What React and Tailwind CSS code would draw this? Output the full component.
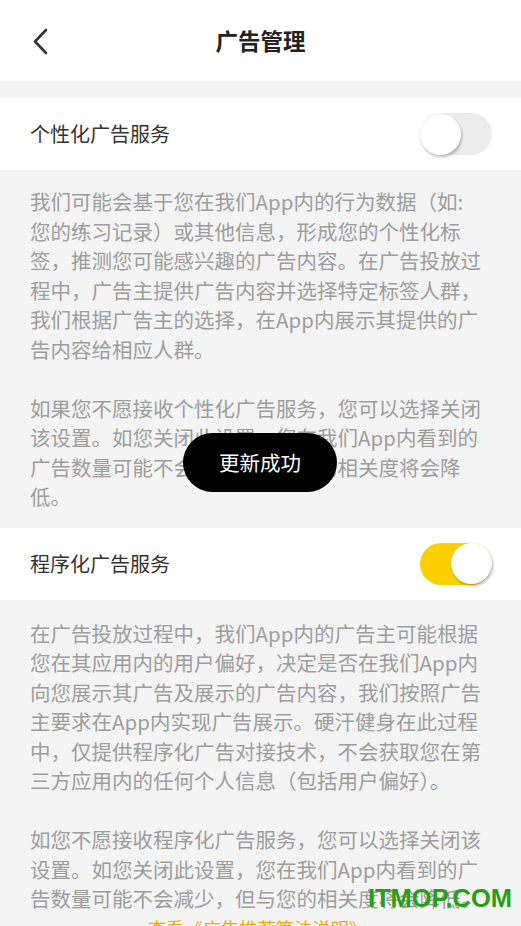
import { useState } from "react";

const font = { fontFamily: '"Noto Sans CJK SC", "Noto Sans", sans-serif' };

// 说明文字按原图逐行排好，避免换行位置不一样
const personalText = [
  "我们可能会基于您在我们App内的行为数据（如:",
  "您的练习记录）或其他信息，形成您的个性化标",
  "签，推测您可能感兴趣的广告内容。在广告投放过",
  "程中，广告主提供广告内容并选择特定标签人群，",
  "我们根据广告主的选择，在App内展示其提供的广",
  "告内容给相应人群。",
  "",
  "如果您不愿接收个性化广告服务，您可以选择关闭",
  "该设置。如您关闭此设置，您在我们App内看到的",
  "广告数量可能不会减少，但与您的相关度将会降",
  "低。",
];

const programText = [
  "在广告投放过程中，我们App内的广告主可能根据",
  "您在其应用内的用户偏好，决定是否在我们App内",
  "向您展示其广告及展示的广告内容，我们按照广告",
  "主要求在App内实现广告展示。硬汗健身在此过程",
  "中，仅提供程序化广告对接技术，不会获取您在第",
  "三方应用内的任何个人信息（包括用户偏好）。",
  "",
  "如您不愿接收程序化广告服务，您可以选择关闭该",
  "设置。如您关闭此设置，您在我们App内看到的广",
  "告数量可能不会减少，但与您的相关度将会降低。",
];

function Toggle({ on, onChange }) {
  return (
    <button
      onClick={onChange}
      className={`relative w-[72px] h-[42px] rounded-full flex items-center ${
        on ? "bg-[#fcd000] justify-end" : "bg-[#ececec] justify-start"
      }`}
    >
      <span className="w-[41px] h-[41px] rounded-full bg-white shadow-[1px_2px_3px_rgba(0,0,0,0.28)]" />
    </button>
  );
}

function SettingRow({ title, on, onChange }) {
  return (
    <div className="bg-white h-[72px] flex items-center justify-between pl-[30px] pr-[29px]">
      <span className="text-[20px] text-[#333]">{title}</span>
      <Toggle on={on} onChange={onChange} />
    </div>
  );
}

function Desc({ lines, className }) {
  return (
    <div className={`px-[30px] text-[20.5px] leading-[29.5px] text-[#9d9d9d] ${className}`}>
      {lines.map((line, i) => (
        <div key={i} className="whitespace-nowrap h-[29.5px]">
          {line}
        </div>
      ))}
    </div>
  );
}

export default function App() {
  const [personal, setPersonal] = useState(false);
  const [program, setProgram] = useState(true);

  return (
    <div className="relative min-h-screen bg-[#f4f4f4] overflow-hidden" style={font}>
      {/* 顶部导航 */}
      <div className="bg-white h-[81px] flex items-center relative">
        <button className="absolute left-[28px] top-[24px] w-[24px] h-[34px] flex items-center justify-center">
          <svg width="18" height="28" viewBox="0 0 18 28" fill="none">
            <path d="M15 3L4 14.5L15 26" stroke="#333" strokeWidth="2.6" strokeLinecap="round" strokeLinejoin="round" />
          </svg>
        </button>
        <h1 className="flex-1 text-center text-[22.5px] font-bold text-[#222] pt-[1px]">广告管理</h1>
      </div>

      <div className="h-[17px]" />

      <SettingRow title="个性化广告服务" on={personal} onChange={() => setPersonal(!personal)} />
      <Desc lines={personalText} className="pt-[17px] pb-[16px]" />

      <SettingRow title="程序化广告服务" on={program} onChange={() => setProgram(!program)} />
      <Desc lines={programText} className="pt-[19px]" />
      <div className="text-center text-[18.3px] leading-[29.5px] text-[#f8a800] pr-[6px]">
        查看《广告推荐算法说明》
      </div>

      {/* 提示 toast */}
      <div className="absolute left-[183px] top-[433px] w-[154px] h-[59px] rounded-full bg-black flex items-center justify-center">
        <span className="text-white text-[20.5px]">更新成功</span>
      </div>

      {/* 水印 */}
      <div
        className="absolute right-[9px] top-[886px] text-[25.5px] font-bold text-[#25a016] leading-none"
        style={{ fontFamily: '"Liberation Sans", Arial, sans-serif' }}
      >
        ITMOP.COM
      </div>
    </div>
  );
}
